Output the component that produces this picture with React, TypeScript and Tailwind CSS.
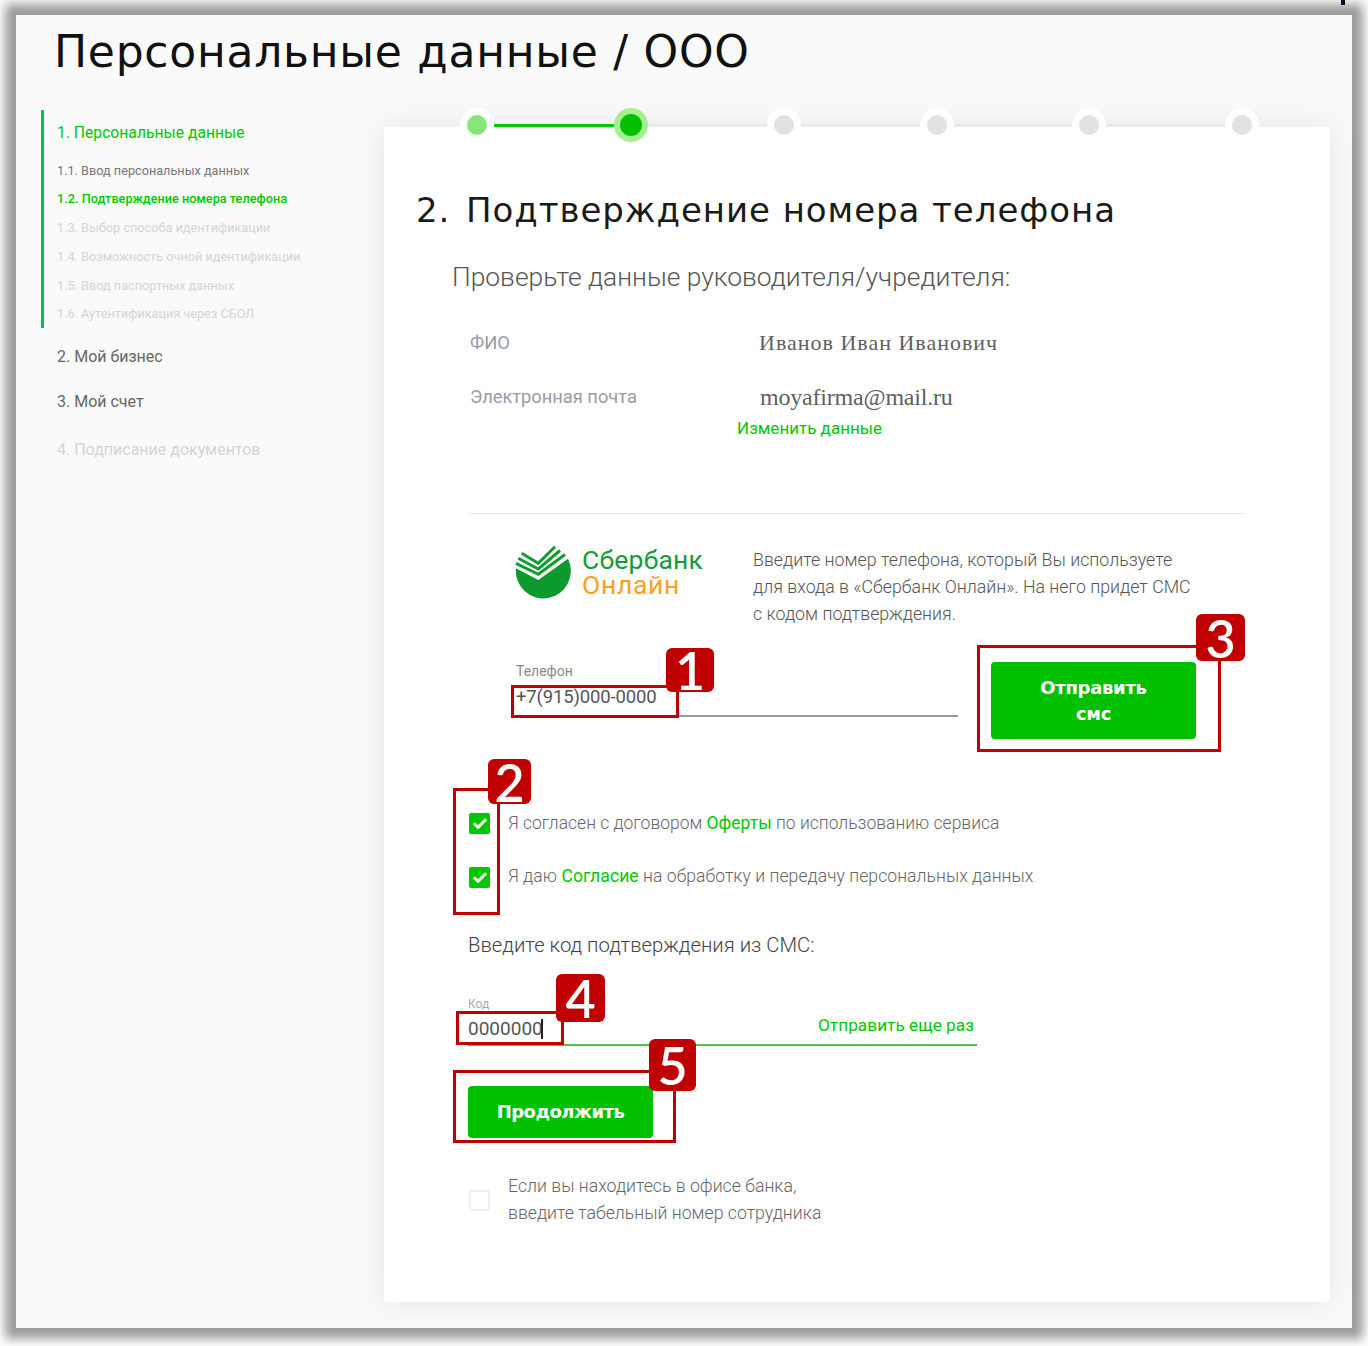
import React from "react";
import { Check } from "lucide-react";

const roboto = "font-['Roboto',sans-serif]";

function Dot({ state }: { state: "done" | "active" | "todo" }) {
  if (state === "active") {
    return (
      <div className="flex h-[34px] w-[34px] shrink-0 items-center justify-center rounded-full bg-[#a6f08f]">
        <div className="h-[22px] w-[22px] rounded-full bg-[#00c000]" />
      </div>
    );
  }
  return (
    <div className="flex h-[34px] w-[34px] shrink-0 items-center justify-center rounded-full bg-white">
      <div className={`h-[20px] w-[20px] rounded-full ${state === "done" ? "bg-[#86e67a]" : "bg-[#e2e2e2]"}`} />
    </div>
  );
}

function Line({ on }: { on?: boolean }) {
  return <div className={`h-[3px] shrink-0 ${on ? "w-[120px] bg-[#00c800]" : "w-[118.8px] bg-[#e9e9e9]"}`} />;
}

function Box({ className }: { className: string }) {
  return <div className={`absolute border-[3px] border-[#c00000] ${className}`} />;
}

function Badge({ n, className }: { n: string; className: string }) {
  return (
    <div
      className={`absolute flex items-center justify-center rounded-md bg-[#c00000] font-['Lato',sans-serif] text-[52px] leading-none font-semibold text-white ${className}`}
    >
      {n}
    </div>
  );
}

function Tick() {
  return (
    <div className="flex h-[21px] w-[21px] shrink-0 items-center justify-center rounded-[2px] bg-[#00c800]">
      <Check size={16} strokeWidth={4.5} className="text-white" />
    </div>
  );
}

function SberLogo() {
  return (
    <svg width="58" height="54" viewBox="0 0 58 54" className="mt-[-2px] -ml-px shrink-0">
      <path d="M1 23.3 L23.3 35 L53 13.8 A27.5 27.5 0 1 1 1 23.3 Z" fill="#0b9a2b" />
      <path d="M1 18.3 L23.3 29.3 L50 9.5" fill="none" stroke="#0f9d2f" strokeWidth="3" />
      <path d="M3.3 13.3 L23.3 24 L45 5.5" fill="none" stroke="#0f9d2f" strokeWidth="3" />
      <path d="M6.7 8.3 L23.3 18.3 L40 1.7" fill="none" stroke="#0f9d2f" strokeWidth="3" />
    </svg>
  );
}

export default function App() {
  return (
    <div className={`relative h-[1346px] w-[1368px] overflow-hidden bg-white ${roboto}`}>
      <div className="ml-[16px] h-[1313px] w-[1336px] translate-y-[15px] bg-[#fafafa] pt-[7px] shadow-[0_0_10px_11px_#9b9b9b]">
        <h1 className="ml-[38px] font-['DejaVu_Sans',sans-serif] text-[44px] leading-[60px] font-normal tracking-[0.75px] text-[#111]">
          Персональные данные / ООО
        </h1>

        <div className="mt-[28px] flex items-start">
          {/* sidebar */}
          <div className="ml-[25px] w-[343px] shrink-0">
            <div className="h-[218px] border-l-[3px] border-[#00c44f] pt-[12px] pl-[13px]">
              <div className="text-[15.7px] leading-[22px] text-[#00c800]">1. Персональные данные</div>
              <ul className="mt-[12.5px] text-[12.7px] leading-[28.8px]">
                <li className="text-[#777]">1.1. Ввод персональных данных</li>
                <li className="font-medium text-[#00c800]">1.2. Подтверждение номера телефона</li>
                <li className="text-[#d4d4d4]">1.3. Выбор способа идентификации</li>
                <li className="text-[#d4d4d4]">1.4. Возможность очной идентификации</li>
                <li className="text-[#d4d4d4]">1.5. Ввод паспортных данных</li>
                <li className="text-[#d4d4d4]">1.6. Аутентификация через СБОЛ</li>
              </ul>
            </div>
            <div className="mt-[18px] pl-[16px] text-[16px] leading-[22px] text-[#666]">2. Мой бизнес</div>
            <div className="mt-[23px] pl-[16px] text-[16px] leading-[22px] text-[#666]">3. Мой счет</div>
            <div className="mt-[26px] pl-[16px] text-[16px] leading-[22px] text-[#d4d4d4]">4. Подписание документов</div>
          </div>

          {/* card */}
          <div className="relative mt-[17px] h-[1175px] w-[946px] shrink-0 rounded-[3px] bg-white pt-[61px] shadow-[0_0_30px_rgba(0,0,0,0.09)]">
            <div className="absolute top-[-19px] left-[76px] flex items-center">
              <Dot state="done" />
              <Line on />
              <Dot state="active" />
              <Line />
              <Dot state="todo" />
              <Line />
              <Dot state="todo" />
              <Line />
              <Dot state="todo" />
              <Line />
              <Dot state="todo" />
            </div>

            <h2 className="ml-[32px] flex font-['DejaVu_Sans',sans-serif] text-[34px] leading-[44px] font-normal tracking-[0.95px] text-[#1a1a1a]">
              <span className="w-[50px]">2.</span>
              <span>Подтверждение номера телефона</span>
            </h2>

            <div className="mt-[29px] ml-[68px] text-[26.4px] leading-[32px] font-light text-[#555]">
              Проверьте данные руководителя/учредителя:
            </div>

            <div className="mt-[36px] ml-[86px] flex items-center leading-[28px]">
              <div className="w-[289px] text-[18.4px] text-[#9a9aa8]">ФИО</div>
              <div className="font-['Liberation_Serif',serif] text-[22px] tracking-[1px] text-[#5f5f5f]">Иванов Иван Иванович</div>
            </div>
            <div className="mt-[26px] ml-[86px] flex items-center leading-[28px]">
              <div className="w-[290px] text-[18.3px] text-[#9a9aa8]">Электронная почта</div>
              <div className="font-['Liberation_Serif',serif] text-[24px] tracking-[-0.2px] text-[#5f5f5f]">moyafirma@mail.ru</div>
            </div>
            <div className="mt-[6px] ml-[353px] text-[17px] leading-[22px] text-[#00c800]">Изменить данные</div>

            <div className="mt-[74px] ml-[86px] h-px w-[774px] bg-[#e6e6e6]" />

            <div className="mt-[33px] ml-[132px] flex">
              <div className="flex w-[237px] shrink-0 gap-[9px]">
                <SberLogo />
                <div className="text-[26.5px] leading-[25px] tracking-[0.2px]">
                  <div className="text-[#139c3a]">Сбербанк</div>
                  <div className="tracking-[0.7px] text-[#f9a11b]">Онлайн</div>
                </div>
              </div>
              <p className="mt-[-1px] text-[17.8px] leading-[27px] font-light text-[#555]">
                Введите номер телефона, который Вы используете
                <br />
                для входа в «Сбербанк Онлайн». На него придет СМС
                <br />с кодом подтверждения.
              </p>
            </div>

            <div className="mt-[35px] ml-[127px] flex items-start">
              <div className="h-[55px] w-[447px] shrink-0 border-b-2 border-[#9a9a9a] pl-[5px]">
                <div className="text-[14px] leading-[18px] text-[#888]">Телефон</div>
                <div className="mt-[4px] text-[18.5px] leading-[26px] tracking-[-0.15px] text-[#555]">+7(915)000-0000</div>
              </div>
              <button className="ml-[33px] h-[77px] w-[205px] rounded-[4px] bg-[#00c000] font-['DejaVu_Sans',sans-serif] text-[18px] leading-[26px] font-bold tracking-[-0.3px] text-white">
                Отправить
                <br />
                смс
              </button>
            </div>

            <div className="mt-[74px] ml-[85px] flex h-[21px] items-center gap-[18px]">
              <Tick />
              <span className="text-[17.5px] font-light text-[#666]">
                Я согласен с договором <span className="font-normal text-[#00c800]">Оферты</span> по использованию сервиса
              </span>
            </div>
            <div className="mt-[33px] ml-[85px] flex h-[21px] items-center gap-[18px]">
              <Tick />
              <span className="mt-[-2px] text-[17.6px] font-light tracking-[0.04px] text-[#666]">
                Я даю <span className="font-normal text-[#00c800]">Согласие</span> на обработку и передачу персональных данных
              </span>
            </div>

            <div className="mt-[44px] ml-[84px] text-[20.3px] leading-[26px] font-light text-[#444]">
              Введите код подтверждения из СМС:
            </div>

            <div className="mt-[40px] ml-[84px] w-[509px]">
              <div className="text-[12px] leading-[12px] text-[#aaa]">Код</div>
              <div className="flex h-[36px] items-center justify-between border-b-2 border-[#45c845] pr-[3px]">
                <div className="mt-[3px] flex items-center text-[19px] leading-[26px] text-[#555]">
                  0000000
                  <span className="ml-[-2px] inline-block h-[20px] w-[2px] bg-[#222]" />
                </div>
                <span className="mb-[3px] text-[17.3px] text-[#00c800]">Отправить еще раз</span>
              </div>
            </div>

            <button className="mt-[40px] ml-[84px] block h-[52px] w-[185px] rounded-[4px] bg-[#00c000] pb-[2px] font-['DejaVu_Sans',sans-serif] text-[18px] font-bold tracking-[-0.5px] text-white">
              Продолжить
            </button>

            <div className="mt-[35px] ml-[85px] flex items-center gap-[18px]">
              <div className="h-[21px] w-[21px] shrink-0 rounded-[2px] border-2 border-[#eeeeee] bg-white" />
              <p className="text-[17.7px] leading-[27px] font-light text-[#666]">
                Если вы находитесь в офисе банка,
                <br />
                введите табельный номер сотрудника
              </p>
            </div>
          </div>
        </div>
      </div>

      {/* annotations */}
      <div className="absolute top-0 left-[1341px] h-[5px] w-[4px] bg-[#0a0a30]" />
      <Box className="top-[685px] left-[511px] h-[33px] w-[168px]" />
      <Box className="top-[645px] left-[977px] h-[107px] w-[244px]" />
      <Box className="top-[788px] left-[453px] h-[127px] w-[47px]" />
      <Box className="top-[1011px] left-[456px] h-[34px] w-[108px]" />
      <Box className="top-[1070px] left-[453px] h-[73px] w-[223px]" />
      <Badge n="1" className="top-[648px] left-[666px] h-[44px] w-[48px]" />
      <Badge n="3" className="top-[614px] left-[1196px] h-[47px] w-[49px]" />
      <Badge n="2" className="top-[759px] left-[488px] h-[45px] w-[43px]" />
      <Badge n="4" className="top-[974px] left-[556px] h-[48px] w-[49px]" />
      <Badge n="5" className="top-[1039px] left-[649px] h-[52px] w-[47px]" />
    </div>
  );
}
